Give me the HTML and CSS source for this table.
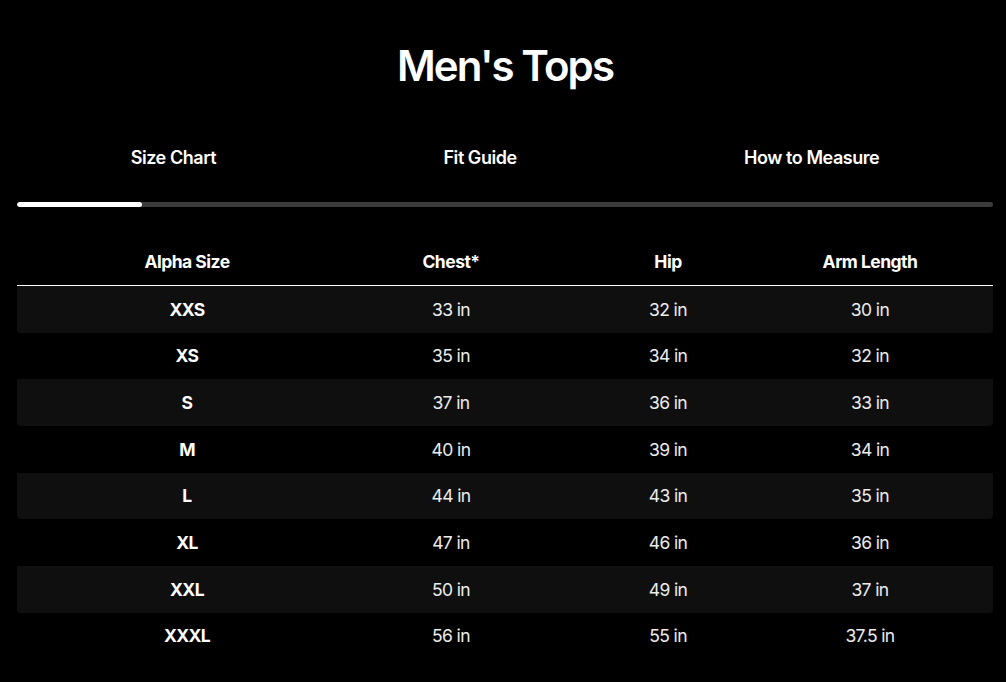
FILE: index.html
```html
<!DOCTYPE html>
<html lang="en">
<head>
<meta charset="utf-8">
<title>Men's Tops</title>
<link rel="stylesheet" href="styles.css">
</head>
<body>
<main class="page">
  <h1 class="title">Men's Tops</h1>
  <nav class="tabs">
    <div class="tab-row">
      <button class="tab">Size Chart</button>
      <button class="tab">Fit Guide</button>
      <button class="tab">How to Measure</button>
    </div>
    <div class="track"><div class="thumb"></div></div>
  </nav>
  <div class="chart">
    <div class="row head">
      <div class="cell">Alpha Size</div>
      <div class="cell">Chest*</div>
      <div class="cell">Hip</div>
      <div class="cell">Arm Length</div>
    </div>
    <div class="row"><div class="cell size">XXS</div><div class="cell">33 in</div><div class="cell">32 in</div><div class="cell">30 in</div></div>
    <div class="row"><div class="cell size">XS</div><div class="cell">35 in</div><div class="cell">34 in</div><div class="cell">32 in</div></div>
    <div class="row"><div class="cell size">S</div><div class="cell">37 in</div><div class="cell">36 in</div><div class="cell">33 in</div></div>
    <div class="row"><div class="cell size">M</div><div class="cell">40 in</div><div class="cell">39 in</div><div class="cell">34 in</div></div>
    <div class="row"><div class="cell size">L</div><div class="cell">44 in</div><div class="cell">43 in</div><div class="cell">35 in</div></div>
    <div class="row"><div class="cell size">XL</div><div class="cell">47 in</div><div class="cell">46 in</div><div class="cell">36 in</div></div>
    <div class="row"><div class="cell size">XXL</div><div class="cell">50 in</div><div class="cell">49 in</div><div class="cell">37 in</div></div>
    <div class="row"><div class="cell size">XXXL</div><div class="cell">56 in</div><div class="cell">55 in</div><div class="cell">37.5 in</div></div>
  </div>
</main>
</body>
</html>
```
FILE: styles.css
```css
* { box-sizing: border-box; }
html, body { margin: 0; padding: 0; background: #000; }
body {
  color: #fff;
  font-family: Inter, "Liberation Sans", Arial, sans-serif;
  width: 1006px;
  height: 682px;
  overflow: hidden;
}
.page {
  padding: 0 13px 0 17px;
}
.title {
  margin: 0;
  padding-top: 40px;
  height: 126px;
  text-align: center;
  font-size: 42px;
  line-height: 52px;
  font-weight: 600;
  letter-spacing: -0.045em;
}
.tabs { display: flex; flex-direction: column; }
.tab-row { display: flex; height: 76px; }
.tab {
  flex: 1 1 auto;
  background: none;
  border: 0;
  padding: 0;
  color: #fff;
  font-family: inherit;
  font-size: 18px;
  font-weight: 600;
  letter-spacing: -0.025em;
  line-height: 64px;
  text-align: center;
  align-self: flex-start;
}
.track {
  height: 5px;
  background: #3b3b3b;
  border-radius: 3px;
  overflow: hidden;
  margin-bottom: 34px;
}
.thumb {
  width: 125px;
  height: 100%;
  background: #fff;
  border-radius: 3px;
}
.chart { display: flex; flex-direction: column; }
.row {
  display: grid;
  grid-template-columns: 340px 188px 246px 158px;
  height: 46.67px;
  align-items: center;
  font-size: 17.5px;
  letter-spacing: -0.035em;
  color: #ececec;
}
.row:nth-child(even) { background: #0f0f0f; border-radius: 0 0 4px 4px; }
.row.head {
  height: 45px;
  border-bottom: 1px solid #fff;
  font-weight: 700;
  color: #fff;
  align-items: start;
  padding-top: 10px;
  letter-spacing: -0.03em;
}
.cell { text-align: center; }
.cell.size { font-weight: 700; color: #fff; }
```
